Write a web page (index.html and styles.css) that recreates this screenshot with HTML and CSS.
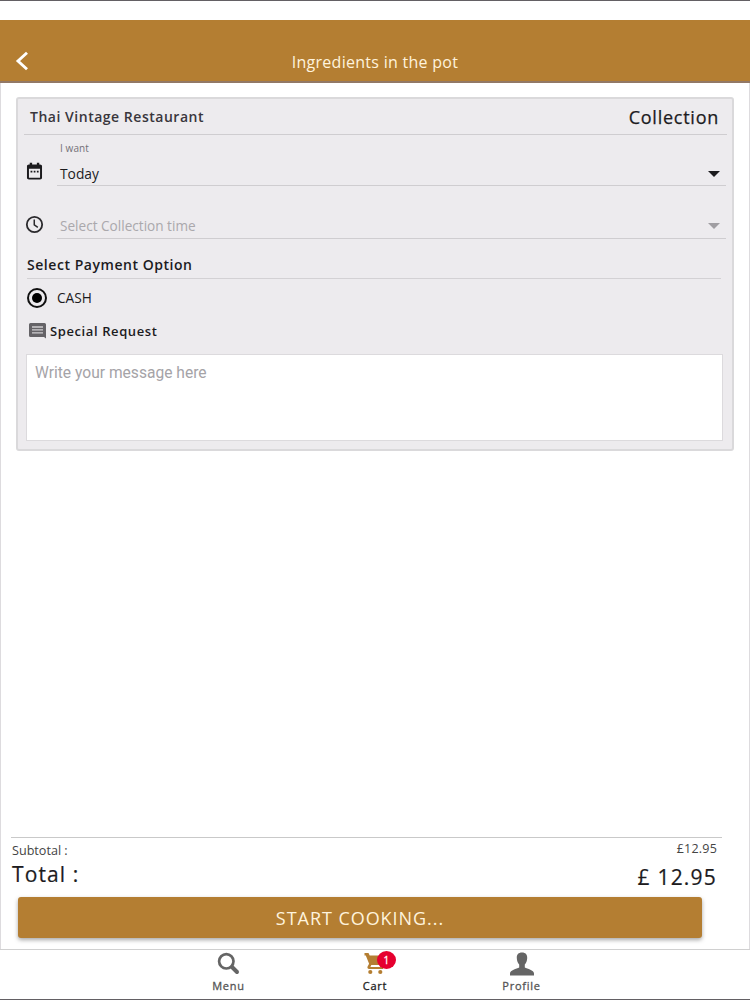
FILE: index.html
```html
<!DOCTYPE html>
<html lang="en">

<head>
    <meta charset="UTF-8">
    <meta name="viewport" content="width=device-width, initial-scale=1.0">
    <title>Ingredients in the pot</title>
    <link rel="stylesheet" href="styles.css">
</head>

<body>
    <div class="app">
        <header class="header">
            <svg class="back" viewBox="0 0 14 20"><path d="M12 1.800 3 10l9 8.200" fill="none" stroke="#fff" stroke-width="2.900"/></svg>
            <h1>Ingredients in the pot</h1>
        </header>

        <main class="content">
            <section class="card">
                <div class="card-head">
                    <h2>Thai Vintage Restaurant</h2>
                    <span class="order-type">Collection</span>
                </div>

                <div class="field field-day">
                    <svg class="field-icon" viewBox="0 0 24 24"><path fill="#1c1b1e" d="M19 3h-1V1h-3v2H9V1H6v2H5c-1.500 0-2.500 1-2.500 2.200V20c0 1.200 1 2.200 2.500 2.200h14c1.500 0 2.500-1 2.500-2.200V5.200C21.500 4 20.500 3 19 3zm0 17H5V8.500h14zM7 11h2.300v2.200H7zm4 0h2.200v2.200H11zm4 0h2.200v2.200H15z"/></svg>
                    <div class="select">
                        <label>I want</label>
                        <span class="value">Today</span>
                        <i class="caret"></i>
                    </div>
                </div>

                <div class="field field-time">
                    <svg class="field-icon" viewBox="0 0 24 24"><g fill="none" stroke="#2b2a2d" stroke-width="2.300"><circle cx="12" cy="12" r="9.700"/><path d="M11.700 5.800v6.700l4.500 3" stroke-width="1.900"/></g></svg>
                    <div class="select disabled">
                        <span class="value">Select Collection time</span>
                        <i class="caret"></i>
                    </div>
                </div>

                <h3 class="payment-title">Select Payment Option</h3>
                <div class="radio">
                    <i class="radio-dot"></i>
                    <span>CASH</span>
                </div>

                <div class="request">
                    <svg viewBox="0 0 17 17"><path fill="#656367" d="M1.500 1h14A1.500 1.500 0 0 1 17 2.500V16.500l-2-1.500H1.500A1.500 1.500 0 0 1 0 13.500v-11A1.500 1.500 0 0 1 1.500 1z"/><path d="M3 5h11M3 7.900h11M3 10.800h11" stroke="#d0ced1" stroke-width="1.300"/></svg>
                    <h3>Special Request</h3>
                </div>
                <div class="message">Write your message here</div>
            </section>

            <section class="summary">
                <div class="labels">
                    <p class="subtotal">Subtotal :</p>
                    <p class="total">Total :</p>
                </div>
                <div class="prices">
                    <p class="subtotal-price">£12.95</p>
                    <p class="total-price">£ 12.95</p>
                </div>
            </section>
            <button class="start"><span>START COOKING...</span></button>
        </main>

        <nav class="tabs">
            <a class="tab">
                <svg viewBox="0 0 24 24"><g fill="none" stroke="#656565"><circle cx="9.300" cy="9.300" r="7.200" stroke-width="2.700"/><path d="m15 15 5 5" stroke-width="4" stroke-linecap="round"/></g></svg>
                <span>Menu</span>
            </a>
            <a class="tab active">
                <svg viewBox="0 0 24 24"><path fill="#b47e32" d="M1.500 1h4l1.200 2.500H21l-3.700 8.300c-.3.700-.9 1.100-1.600 1.100H8.300l-.9 2.100H20v2H6.200c-1.500 0-2.200-1.300-1.600-2.500l1.500-2.700L2.800 3.500H1.500z"/><circle cx="7.300" cy="20" r="2.100" fill="#b47e32"/><circle cx="17.300" cy="20" r="2.100" fill="#b47e32"/></svg>
                <b class="badge">1</b>
                <span>Cart</span>
            </a>
            <a class="tab">
                <svg viewBox="0 0 24 24"><path fill="#656565" d="M12 .5c3.600 0 5.400 2.200 5.200 5.500-.1 2.900-.9 5-2.400 6.600v3c2.500 1.400 9.200 2.500 9.200 6v1.800H0v-1.800c0-3.500 6.700-4.600 9.200-6v-3C7.700 11 6.900 8.900 6.800 6 6.600 2.700 8.400.5 12 .5z"/></svg>
                <span>Profile</span>
            </a>
        </nav>
    </div>
</body>

</html>
```
FILE: styles.css
```css
* {
    box-sizing: border-box;
}

body,
html {
    margin: 0;
    padding: 0;
    height: 100%;
    font-family: "Open Sans", "Noto Sans", sans-serif;
    color: #1c1b1e;
    background: #fff;
}

h1,
h2,
h3,
p {
    margin: 0;
    white-space: nowrap;
}

svg {
    display: block;
    flex: none;
}

.app {
    display: flex;
    flex-direction: column;
    width: 750px;
    height: 1000px;
    padding-top: 19px;
    border-top: 1px solid #636064;
    border-bottom: 1px solid #636064;
    overflow: hidden;
}

.header {
    display: grid;
    grid-template-columns: 1fr auto 1fr;
    align-items: center;
    height: 63px;
    padding: 20px 15px 0;
    background: #b47e32;
    border-bottom: 2px solid #927866;
}

.header h1 {
    padding-top: 2px;
    font-size: 16px;
    font-weight: 400;
    letter-spacing: 0.28px;
    line-height: 22px;
    color: #fff3dd;
}

.back {
    width: 14px;
    height: 20px;
}

.content {
    display: flex;
    flex-direction: column;
    flex: 1;
    padding: 14px 15px 11px 15px;
    border-left: 1px solid #dddbde;
    border-right: 1px solid #dddbde;
}

.card {
    height: 354px;
    border: 2px solid #dad9db;
    border-radius: 3px;
    background: #edebee;
}

.card-head {
    display: flex;
    justify-content: space-between;
    align-items: center;
    height: 36px;
    margin: 0 5px 0 6px;
    padding: 0 8px 0 6px;
    border-bottom: 1px solid #cfcdd0;
}

.card-head h2 {
    font-size: 14px;
    font-weight: 600;
    letter-spacing: 0.52px;
    color: #39363c;
}

.order-type {
    font-size: 18px;
    letter-spacing: 0.75px;
    -webkit-text-stroke: 0.25px;
}

.field {
    display: flex;
    padding: 0 6px 0 7px;
}

.field-icon {
    width: 19px;
    height: 19px;
    margin: 0 13px 0 0;
}

.field-day {
    height: 51px;
}

.field-day .field-icon {
    margin-top: 27px;
}

.field-time {
    height: 53px;
}

.field-time .field-icon {
    margin-top: 29px;
}

.select {
    display: grid;
    grid-template-columns: 1fr auto;
    align-content: end;
    align-items: center;
    flex: 1;
    padding: 0 6px 1px 3px;
    border-bottom: 1px solid #cfcdd0;
}

.select label {
    grid-column: 1 / -1;
    font-size: 10px;
    line-height: 14px;
    letter-spacing: 0.1px;
    margin-bottom: 9px;
    color: #747178;
}

.select .value {
    font-size: 13.800px;
    line-height: 20px;
}

.caret {
    border: 6px solid transparent;
    border-top-color: #1c1b1e;
    border-bottom: 0;
}

.select.disabled {
    padding-bottom: 2px;
}

.select.disabled .value {
    font-size: 13.600px;
    color: #aaa8ac;
}

.select.disabled .caret {
    border-top-color: #a09ea2;
}

.payment-title {
    height: 40px;
    margin: 0 11px 0 9px;
    padding-top: 16px;
    border-bottom: 1px solid #d3d1d4;
    font-size: 14px;
    font-weight: 600;
    line-height: 20px;
    letter-spacing: 0.54px;
}

.radio {
    display: flex;
    align-items: center;
    gap: 10px;
    height: 37px;
    padding-left: 9px;
    font-size: 13.700px;
}

.radio-dot {
    display: flex;
    justify-content: center;
    align-items: center;
    width: 20px;
    height: 20px;
    border: 2px solid #111;
    border-radius: 50%;
}

.radio-dot::after {
    content: "";
    width: 10px;
    height: 10px;
    border-radius: 50%;
    background: #000;
}

.request {
    display: flex;
    align-items: center;
    gap: 4px;
    height: 29px;
    padding-left: 11px;
}

.request svg {
    width: 17px;
    height: 17px;
}

.request h3 {
    font-size: 13px;
    font-weight: 600;
    letter-spacing: 0.6px;
}

.message {
    height: 87px;
    margin: 9px 9px 0 8px;
    padding: 8px;
    border: 1px solid #dcdadd;
    background: #fff;
    font-family: Roboto, sans-serif;
    font-size: 15.600px;
    line-height: 20px;
    color: #a5a3a7;
}

.summary {
    display: flex;
    justify-content: space-between;
    width: 711px;
    height: 60px;
    margin: auto 0 0 -5px;
    padding: 0 4px 0 1px;
    border-top: 1px solid #c9c9c9;
}

.labels .subtotal {
    margin-top: 4px;
    font-size: 12.600px;
    line-height: 18px;
    color: #444;
}

.labels .total {
    font-size: 21px;
    line-height: 28px;
    letter-spacing: 1.1px;
    -webkit-text-stroke: 0.2px;
}

.prices {
    text-align: right;
    padding-right: 1px;
}

.subtotal-price {
    margin-top: 2px;
    font-size: 12.500px;
    line-height: 18px;
    letter-spacing: 0.2px;
    color: #444;
}

.total-price {
    margin-top: 5px;
    font-size: 21px;
    line-height: 28px;
    letter-spacing: 1.2px;
    -webkit-text-stroke: 0.2px;
}

.start {
    width: 684px;
    height: 41px;
    margin-left: 2px;
    padding: 1px 0 0;
    border: 0;
    border-radius: 3px;
    background: #b47e32;
    box-shadow: 0 2px 4px rgba(0, 0, 0, 0.35);
    font-family: inherit;
    font-size: 18px;
    line-height: 40px;
    letter-spacing: 0.95px;
    color: #fff3dd;
}

.tabs {
    display: grid;
    grid-template-columns: repeat(3, 146.500px);
    justify-content: center;
    height: 50px;
    border-top: 1px solid #d0d0d0;
}

.tab {
    display: flex;
    flex-direction: column;
    align-items: center;
    position: relative;
    padding-top: 2px;
    font-size: 11px;
    line-height: 16px;
    letter-spacing: 0.75px;
    -webkit-text-stroke: 0.3px;
    color: #555;
}

.tab svg {
    width: 24px;
    height: 24px;
    margin-bottom: 2px;
}

.tab.active {
    color: #222;
}

.badge {
    position: absolute;
    top: 1px;
    left: 75px;
    width: 19px;
    height: 18px;
    border-radius: 50%;
    background: #e6002f;
    font-size: 10px;
    font-weight: 400;
    line-height: 18px;
    letter-spacing: 0;
    text-align: center;
    color: #fff;
}
```
